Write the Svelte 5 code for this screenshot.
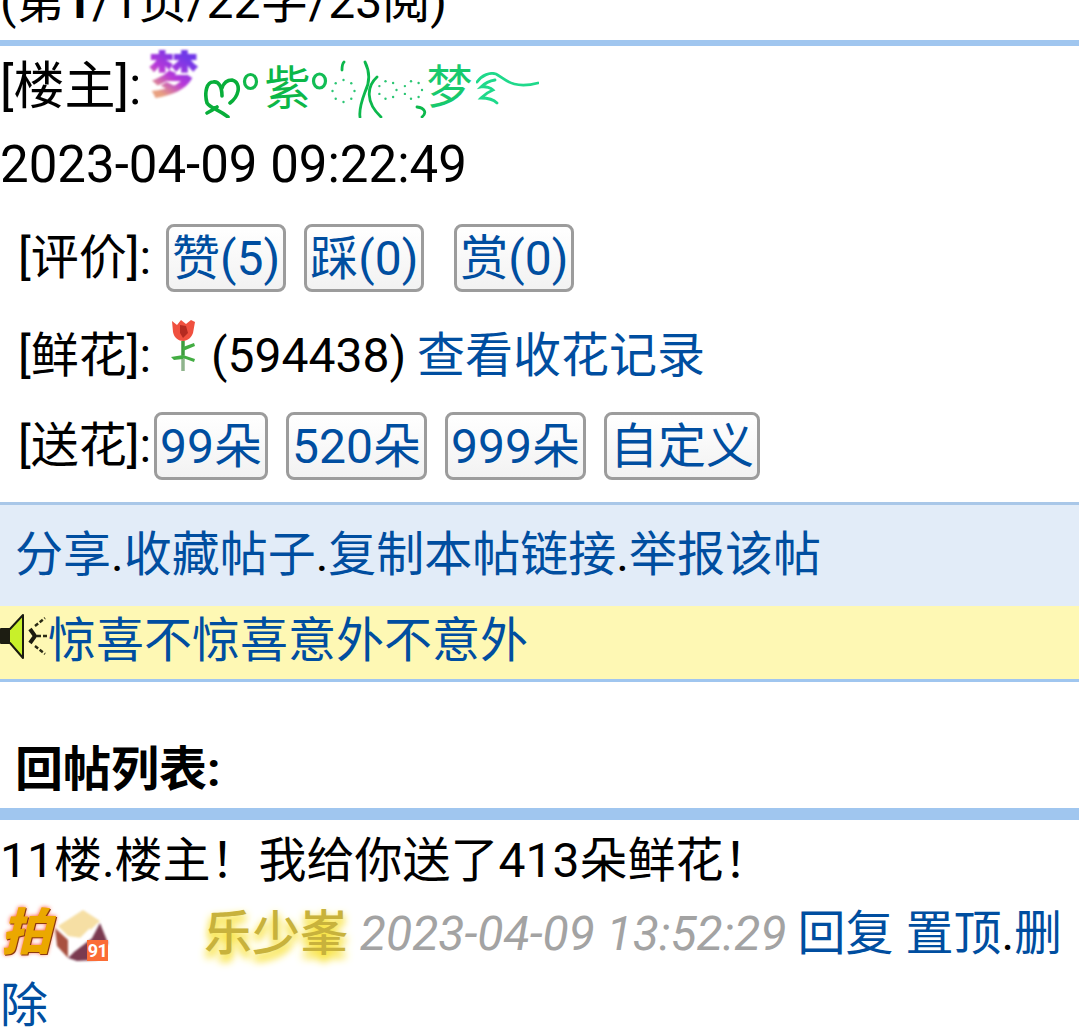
<script>
  const rates = [
    { label: '赞(5)', cls: 'gap-a' },
    { label: '踩(0)', cls: 'gap-b' },
    { label: '赏(0)', cls: '' }
  ];
  const gifts = ['99朵', '520朵', '999朵', '自定义'];

  function ring(cx, cy, r, n = 8) {
    return Array.from({ length: n }, (_, i) => {
      const a = (i / n) * Math.PI * 2;
      return { x: cx + Math.cos(a) * r, y: cy + Math.sin(a) * r };
    });
  }
  const dots = [...ring(34.5, 31, 11), ...ring(78.5, 30, 9, 7), ...ring(104, 30, 9, 7)];
</script>

<div class="page">
  <div class="title">(第<b>1</b>/1页/22字/23阅)</div>
  <div class="rule top"></div>

  <div class="owner">
    <span>[楼主]:</span>
    <span class="dream">梦</span>
    <span class="nick">
      <svg class="curl" width="60" height="48" viewBox="0 0 60 48" aria-hidden="true">
        <path d="M3 33 C0 22 3 12 9 12 C15 11 18 17 18 26 M18 18 C20 12 24 10 28 10 C33 11 35 16 34 21 C33 26 30 30 26 33 M3 33 C6 38 14 39 24 47 M3 43 C7 41 10 39 13 37" fill="none" stroke="#08ae3a" stroke-width="3.6" stroke-linecap="round"/>
        <ellipse cx="46.5" cy="11.5" rx="6" ry="7" fill="none" stroke="#10b84a" stroke-width="3.2"/>
      </svg><span class="zi">紫</span><svg class="mid" width="118" height="58" viewBox="0 0 118 58" aria-hidden="true">
        <ellipse cx="10.5" cy="21" rx="6" ry="7" fill="none" stroke="#12bd55" stroke-width="3.2"/>
        <g fill="#2cc674">
          {#each dots as d}<circle cx={d.x} cy={d.y} r="1.2"/>{/each}
        </g>
        <path d="M35 2 C33 4 33 7 33 10 M56 2 C62 14 60 24 56 32 C53 40 50 50 51 57 M68 17 C58 26 56 42 72 57 M108 47 C116 48 118 53 113 57" fill="none" stroke="#0cb84c" stroke-width="2.8" stroke-linecap="round"/>
      </svg><span class="meng">梦</span><svg class="wave" width="63" height="34" viewBox="0 0 63 34" aria-hidden="true">
        <path d="M1 10 C6 3 14 0 20 2 C28 6 36 18 62 11 M19 8 C12 9 8 12 5 15 C10 14 15 16 17 18 C12 20 8 23 5 26 C12 26 18 28 21 31" fill="none" stroke="#1fd98b" stroke-width="2.8" stroke-linecap="round"/>
      </svg>
    </span>
  </div>

  <div class="date">2023-04-09 09:22:49</div>

  <div class="row rate">
    <span class="label">[评价]:</span>
    {#each rates as r}
      <a class="btn {r.cls}" href="#a">{r.label}</a>
    {/each}
  </div>

  <div class="row flower">
    <span class="label">[鲜花]:</span>
    <svg class="rose" width="30" height="52" viewBox="0 0 30 52" aria-hidden="true">
      <path d="M15 22 V36" stroke="#3f9c3f" stroke-width="3.5"/>
      <path d="M15 36 V52" stroke="#8fb48c" stroke-width="3.5"/>
      <path d="M15 28 L26 24 L27 27 L15 32Z M15 36 L3 38 L6 41 L15 40Z M15 36 L27 40 L26 43 L15 39Z" fill="#43ad43"/>
      <path d="M4 2 L9 6 L13 1 L18 5 L23 1 L27 3 L25 14 C23 20 18 22 15 22 C11 22 6 19 5 13Z" fill="#f0503f"/>
      <path d="M12 6 L18 7 L20 14 L15 19 L12 14Z" fill="#b52a20"/>
    </svg>
    <span class="count">(594438)</span>
    <a href="#a">查看收花记录</a>
  </div>

  <div class="row send">
    <span class="label">[送花]:</span>
    <div class="gifts">
      {#each gifts as g}
        <a class="btn" href="#a">{g}</a>
      {/each}
    </div>
  </div>

  <div class="tools"><a href="#a">分享</a>.<a href="#a">收藏帖子</a>.<a href="#a">复制本帖链接</a>.<a href="#a">举报该帖</a></div>

  <div class="notice">
    <svg class="speaker" width="50" height="50" viewBox="0 0 50 50" aria-hidden="true">
      <path d="M1 17 H10 L23 3 V46 L10 31 H1Z" fill="#c8f02a" stroke="#1a1a10" stroke-width="2" stroke-linejoin="round"/>
      <path d="M0 17 H10 V31 H0Z" fill="#1d1d12"/>
      <path d="M30 17 L35 24 L30 31" fill="none" stroke="#1c1c10" stroke-width="4"/>
      <path d="M35 14 L45 6 M37 24 H48 M35 34 L45 42" fill="none" stroke="#2a2a14" stroke-width="2.4" stroke-dasharray="4 2"/>
    </svg>
    <a href="#a">惊喜不惊喜意外不意外</a>
  </div>

  <div class="replies-title">回帖列表:</div>
  <div class="rule thick"></div>

  <div class="floor">11楼.楼主！我给你送了413朵鲜花！</div>

  <div class="reply">
    <span class="medal"><i>拍</i><svg width="56" height="54" viewBox="0 0 56 54" aria-hidden="true">
        <path d="M47 15 L55 35 L44 52 L24 53 L15 50 L22 43 L39 30Z" fill="#7a3a50"/>
        <path d="M5 18 L30 2 L47 13 L29 30 L15 28Z" fill="#f6dfa4"/>
        <path d="M2 20 L15 32 L15 50 L4 38Z" fill="#a8503f"/>
        <path d="M17 40 L37 20 L39 30 L22 43Z" fill="#fff"/>
      </svg><b>91</b></span>
    <span class="user">乐少峯</span>
    <em>2023-04-09 13:52:29</em>
    <a href="#a">回复</a>
    <a href="#a">置顶</a>.<a href="#a">删除</a>
  </div>
</div>

<style>
  :global(body) {
    margin: 0;
    background: #fff;
  }

  .page {
    height: 1033px;
    overflow: hidden;
    font: 48px/1.2 Roboto, "Noto Sans CJK SC", sans-serif;
    color: #000;
  }

  a {
    color: #004ea0;
    text-decoration: none;
  }

  .title {
    height: 40px;
    line-height: 4px;
    white-space: nowrap;
  }

  .rule.top {
    height: 6px;
    background: #a0c6ef;
  }

  .owner {
    height: 73px;
    display: flex;
    align-items: flex-start;
    font-size: 51px;
    line-height: 82px;
    white-space: nowrap;
  }

  .dream {
    margin: 4px 0 0 7px;
    font-weight: 900;
    font-size: 50px;
    line-height: 52px;
    background: linear-gradient(35deg, #e8a080 20%, #b838d8 48%, #7038e8 82%);
    -webkit-background-clip: text;
    background-clip: text;
    color: transparent;
    filter: blur(0.8px);
  }

  .nick {
    display: flex;
    align-items: flex-start;
    color: #0cb748;
    font-size: 46px;
    margin-left: 6px;
  }

  .curl {
    margin-top: 24px;
  }

  .zi {
    line-height: 84px;
    margin-right: -1px;
  }

  .mid {
    margin-top: 14px;
  }

  .meng {
    color: #17c96d;
    line-height: 82px;
    margin-left: -1px;
  }

  .wave {
    margin-top: 26px;
    margin-left: 4px;
  }

  .date {
    height: 92px;
    font-size: 51px;
    line-height: 92px;
  }

  .row {
    display: flex;
    align-items: center;
    white-space: nowrap;
  }

  .label {
    margin-left: 18px;
  }

  .rate {
    height: 68px;
    margin-top: 13px;
    gap: 15px;
  }

  .btn {
    display: block;
    height: 68px;
    box-sizing: border-box;
    padding: 0 3px;
    line-height: 64px;
    border: 3px solid #9c9c9c;
    border-radius: 8px;
    background: linear-gradient(#fff, #f2f2f2);
  }

  .gap-a {
    margin-right: 3px;
  }

  .gap-b {
    margin-right: 15px;
  }

  .flower {
    height: 92px;
    margin-top: 18px;
  }

  .rose {
    margin: -22px 13px 0 17px;
    filter: blur(0.6px);
  }

  .count {
    margin-right: 11px;
  }

  .send {
    height: 68px;
    margin-top: 10px;
  }

  .gifts {
    display: flex;
    gap: 18px;
    margin-left: 3px;
  }

  .tools {
    margin-top: 22px;
    height: 101px;
    line-height: 100px;
    padding-left: 15px;
    background: #e2ecf8;
    border-top: 3px solid #a9c7e8;
    white-space: nowrap;
  }

  .notice {
    height: 73px;
    display: flex;
    align-items: flex-start;
    line-height: 70px;
    background: #fef8b4;
    border-bottom: 3px solid #a0c6ef;
  }

  .speaker {
    margin-top: 6px;
    margin-right: -2px;
  }

  .replies-title {
    height: 126px;
    padding-left: 15px;
    line-height: 176px;
    font-weight: 700;
  }

  .rule.thick {
    height: 12px;
    background: #a0c6ef;
  }

  .floor {
    height: 78px;
    line-height: 82px;
    white-space: nowrap;
  }

  .reply {
    line-height: 72px;
  }

  .medal {
    display: inline-block;
    position: relative;
    width: 192px;
    height: 54px;
    vertical-align: -10px;
    line-height: 54px;
  }

  .medal i {
    position: absolute;
    left: 1px;
    top: 0;
    font-size: 50px;
    font-weight: 900;
    color: #eba800;
    text-shadow: 1px 1px 0 #8a3a10, 0 0 4px #ff4020;
  }

  .medal svg {
    position: absolute;
    left: 53px;
    top: 2px;
    filter: blur(0.8px);
  }

  .medal b {
    position: absolute;
    left: 87px;
    top: 34px;
    width: 21px;
    height: 21px;
    background: #fb6d36;
    color: #fff;
    font-size: 18px;
    line-height: 21px;
    letter-spacing: -0.5px;
    text-align: center;
  }

  .user {
    color: #c8b23c;
    font-weight: 500;
    text-shadow: 0 7px 9px #f8e23a, 0 4px 8px #f8e23a;
  }

  em {
    color: #a3a3a3;
    margin-right: -1px;
  }
</style>
